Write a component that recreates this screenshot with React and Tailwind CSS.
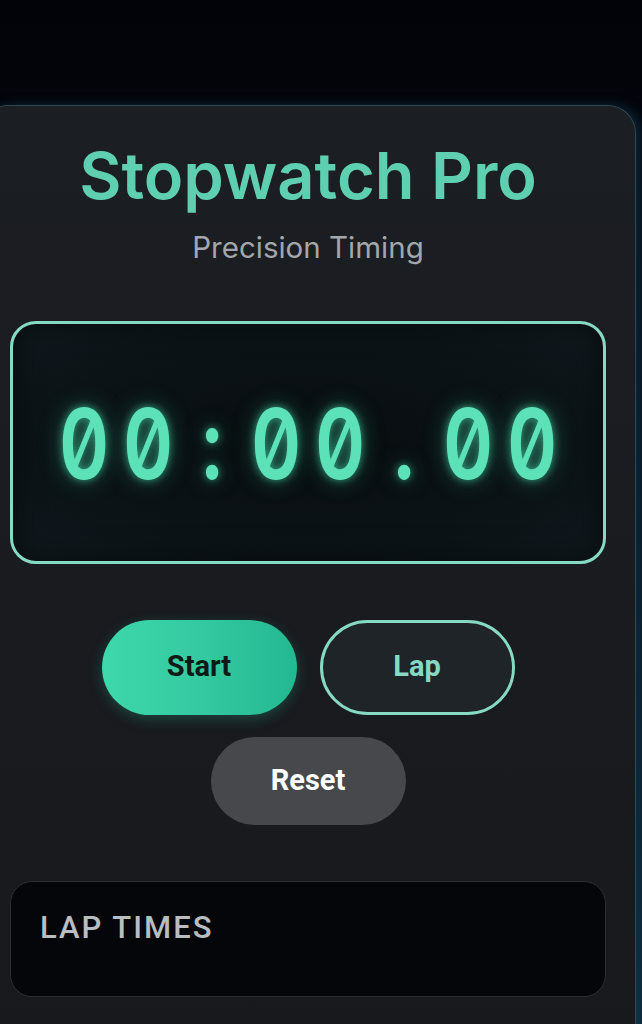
import React from "react";

const buttonBase =
  "flex items-center justify-center rounded-full font-['Roboto',sans-serif] font-bold text-[29px]";

const TIME = "00:00.00".split("");

export default function App() {
  return (
    <div className="min-h-screen overflow-hidden bg-gradient-to-b from-[#020308] via-[#06101a] to-[#0c2230] pt-[105px]">
      <div className="ml-[-20px] w-[656px] rounded-t-[28px] border-[1.5px] border-b-0 border-[#2b4a51] bg-gradient-to-b from-[#1b1e22] to-[#17191d] px-[29px] pt-[37px] pb-[40px] shadow-[6px_0_12px_rgba(30,90,120,0.35)]">
        <h1 className="text-center font-['Inter',sans-serif] text-[65px] font-semibold leading-none text-[#5fcfb1]">
          Stopwatch Pro
        </h1>
        <p className="mt-[25px] text-center font-['Inter',sans-serif] text-[29.5px] leading-none text-[#a3a7ab]">
          Precision Timing
        </p>

        <div className="mt-[58px] flex h-[243px] items-center justify-center rounded-[26px] border-[3px] border-[#86d9c3] bg-[radial-gradient(ellipse_at_center,#080c0f_0%,#0c1418_70%,#111a1f_100%)] shadow-[inset_0_0_30px_rgba(0,0,0,0.6)]">
          <div className="flex pt-[4px] font-['Inter',sans-serif] text-[98px] font-semibold leading-none text-[#5de2b7] [font-feature-settings:'zero','tnum'] [text-shadow:0_0_10px_rgba(70,230,180,0.65),0_0_26px_rgba(60,220,170,0.35)]">
            {TIME.map((ch, i) => (
              <span key={i} className="w-[64px] scale-x-[0.8] text-center">
                {ch}
              </span>
            ))}
          </div>
        </div>

        <div className="mt-[56px] flex flex-wrap justify-center gap-x-[23px] gap-y-[22px]">
          <button className={`${buttonBase} h-[95px] w-[195px] bg-gradient-to-r from-[#3dd8ab] via-[#35c9a0] to-[#22b892] text-[#0c1a16] shadow-[0_4px_14px_rgba(40,200,160,0.25)]`}>
            Start
          </button>
          <button className={`${buttonBase} h-[95px] w-[195px] border-[3px] border-[#86d9c3] bg-[#1f2429] text-[#86d9c3]`}>
            Lap
          </button>
          <button className={`${buttonBase} h-[88px] w-[195px] bg-[#47484c] text-white`}>
            Reset
          </button>
        </div>

        <div className="mt-[56px] h-[116px] rounded-[22px] border border-[#2b2e33] bg-[#040609] px-[29px] pt-[30px]">
          <h2 className="font-['Roboto',sans-serif] text-[31px] font-medium leading-none tracking-[2px] text-[#b9bcc0]">
            LAP TIMES
          </h2>
        </div>
      </div>
    </div>
  );
}
